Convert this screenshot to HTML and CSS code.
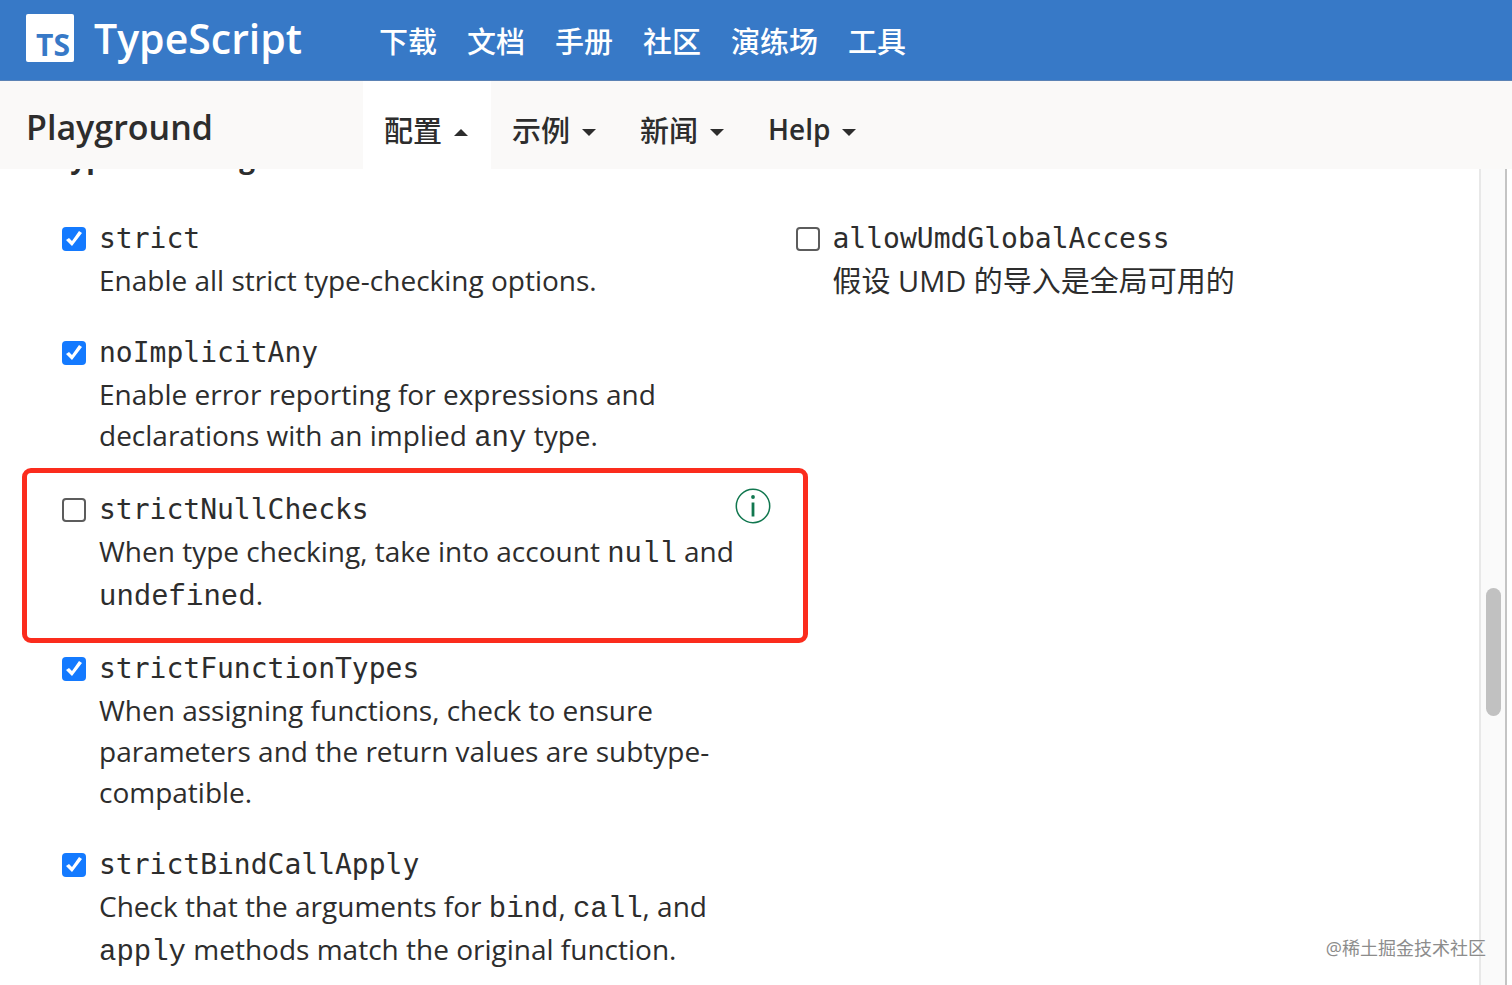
FILE: index.html
```
<!DOCTYPE html>
<html lang="zh-CN">
<head>
    <meta charset="UTF-8">
    <meta name="viewport" content="width=device-width, initial-scale=1.0">
    <title>TypeScript Playground</title>
    <link rel="stylesheet" href="styles.css">
</head>
<body>
    <header class="site-header">
        <a class="brand" href="#">
            <span class="logo">TS</span>
            <span class="brand-name">TypeScript</span>
        </a>
        <nav class="site-nav">
            <a href="#">下载</a>
            <a href="#">文档</a>
            <a href="#">手册</a>
            <a href="#">社区</a>
            <a href="#">演练场</a>
            <a href="#">工具</a>
        </nav>
    </header>

    <div class="subnav">
        <h1>Playground</h1>
        <button class="tab active" type="button">配置 <span class="caret up"></span></button>
        <button class="tab" type="button">示例 <span class="caret"></span></button>
        <button class="tab" type="button">新闻 <span class="caret"></span></button>
        <button class="tab latin" type="button">Help <span class="caret"></span></button>
    </div>

    <div class="panel">
        <main class="settings">
            <h2>Type Checking</h2>
            <div class="columns">
                <div class="column">
                    <div class="option">
                        <input type="checkbox" id="strict" checked>
                        <div class="option-text">
                            <label for="strict">strict</label>
                            <p>Enable all strict type-checking options.</p>
                        </div>
                    </div>
                    <div class="option">
                        <input type="checkbox" id="noImplicitAny" checked>
                        <div class="option-text">
                            <label for="noImplicitAny">noImplicitAny</label>
                            <p>Enable error reporting for expressions and declarations with an implied <code>any</code> type.</p>
                        </div>
                    </div>
                    <div class="option highlight">
                        <input type="checkbox" id="strictNullChecks">
                        <div class="option-text">
                            <label for="strictNullChecks">strictNullChecks</label>
                            <p>When type checking, take into account <code>null</code> and <code>undefined</code>.</p>
                        </div>
                        <a class="info" href="#" aria-label="strictNullChecks info">
                            <svg width="36" height="36" viewBox="0 0 36 36">
                                <circle cx="18" cy="18" r="16.7" fill="none" stroke="#11774f" stroke-width="1.5"/>
                                <circle cx="18" cy="9" r="1.9" fill="#11774f"/>
                                <path d="M18 14.5V28.5" stroke="#11774f" stroke-width="2.8"/>
                            </svg>
                        </a>
                    </div>
                    <div class="option">
                        <input type="checkbox" id="strictFunctionTypes" checked>
                        <div class="option-text">
                            <label for="strictFunctionTypes">strictFunctionTypes</label>
                            <p>When assigning functions, check to ensure parameters and the return values are subtype-compatible.</p>
                        </div>
                    </div>
                    <div class="option">
                        <input type="checkbox" id="strictBindCallApply" checked>
                        <div class="option-text">
                            <label for="strictBindCallApply">strictBindCallApply</label>
                            <p>Check that the arguments for <code>bind</code>, <code>call</code>, and <code>apply</code> methods match the original function.</p>
                        </div>
                    </div>
                </div>
                <div class="column">
                    <div class="option">
                        <input type="checkbox" id="allowUmdGlobalAccess">
                        <div class="option-text">
                            <label for="allowUmdGlobalAccess">allowUmdGlobalAccess</label>
                            <p class="zh">假设 UMD 的导入是全局可用的</p>
                        </div>
                    </div>
                </div>
            </div>
        </main>
        <div class="scrollbar"><div class="thumb"></div></div>
        <span class="watermark">@稀土掘金技术社区</span>
    </div>
</body>
</html>
```
FILE: styles.css
```
* {
    box-sizing: border-box;
}
body {
    margin: 0;
    height: 100vh;
    display: flex;
    flex-direction: column;
    overflow: hidden;
    font-family: "Open Sans", "Noto Sans CJK SC", sans-serif;
    font-size: 28px;
    color: #2d2d2d;
    background: #fff;
}
h1, h2, p {
    margin: 0;
}
a {
    text-decoration: none;
}

/* blue bar */
.site-header {
    display: flex;
    align-items: center;
    flex: none;
    height: 81px;
    padding: 0 26px;
    background: #3779c7;
    border-bottom: 1px solid #5b82b5;
}
.brand {
    display: flex;
    align-items: center;
    gap: 20px;
    width: 353px;
    padding-bottom: 4px;
    color: #fff;
}
.logo {
    display: flex;
    align-items: flex-end;
    justify-content: flex-end;
    width: 48px;
    height: 48px;
    padding: 0 4px;
    border-radius: 2px;
    background: #fff;
    color: #3779c7;
    font-size: 30px;
    font-weight: 700;
    line-height: 34px;
}
.brand-name {
    font-size: 41px;
    font-weight: 600;
    line-height: 48px;
}
.site-nav {
    display: flex;
    gap: 30px;
}
.site-nav a {
    color: #fff;
    font-size: 29px;
    font-weight: 500;
}

/* playground tabs */
.subnav {
    display: flex;
    flex: none;
    height: 88px;
    background: #faf9f8;
}
.subnav h1 {
    width: 363px;
    padding-left: 26px;
    font-size: 34px;
    font-weight: 600;
    line-height: 92px;
}
.tab {
    display: flex;
    align-items: center;
    gap: 12px;
    padding: 8px 23px 0 21px;
    border: none;
    background: none;
    color: #2d2d2d;
    font-family: inherit;
    font-size: 29px;
    font-weight: 500;
}
.tab.active {
    background: #fff;
}
.tab.latin {
    font-size: 28px;
    font-weight: 600;
}
.caret {
    margin-top: 6px;
    border: 7px solid transparent;
    border-top-color: #2d2d2d;
    border-bottom: none;
}
.caret.up {
    border-top: none;
    border-bottom: 7px solid #2d2d2d;
}

/* settings */
.panel {
    position: relative;
    display: flex;
    flex: 1;
    min-height: 0;
    padding-right: 5px;
}
.settings {
    flex: 1;
    overflow: hidden;
    padding-left: 54px;
}
.settings h2 {
    margin-top: -32px;
    margin-bottom: 39px;
    font-size: 28px;
    font-weight: 700;
    line-height: 41px;
}
.columns {
    display: grid;
    grid-template-columns: 50% 1fr;
    column-gap: 25px;
    padding-left: 8px;
}
.option {
    position: relative;
    display: flex;
    gap: 13px;
    margin-bottom: 30px;
}
.option input {
    appearance: none;
    flex: none;
    width: 24px;
    height: 24px;
    margin: 10px 0 0;
    border: 2px solid #5c5c5c;
    border-radius: 4px;
    background: #fff;
}
.option input:checked {
    border: none;
    background: #147aff;
}
.option input:checked::after {
    content: "";
    display: block;
    height: 24px;
    background: #fff;
    clip-path: polygon(4px 13px, 7px 11px, 10px 14px, 17px 4px, 20px 6px, 10px 19px);
}
.option label {
    display: block;
    font-family: "DejaVu Sans Mono", monospace;
    line-height: 43px;
}
.option p {
    line-height: 41px;
}
.option .zh {
    font-size: 29px;
}
.option code {
    font-family: "Liberation Mono", monospace;
    font-size: 29px;
    line-height: 38px;
}
.info {
    position: absolute;
    top: 0;
    right: 0;
    display: flex;
}
.highlight::before {
    content: "";
    position: absolute;
    top: -20px;
    right: -37px;
    bottom: -26px;
    left: -40px;
    border: 5px solid #fb2c1d;
    border-radius: 9px;
    pointer-events: none;
}

.scrollbar {
    position: relative;
    flex: none;
    width: 28px;
    background: #fafafa;
    border-left: 2px solid #e8e8e8;
    border-right: 2px solid #c4c4c4;
}
.thumb {
    position: absolute;
    top: 51.4%;
    left: 5px;
    width: 15px;
    height: 128px;
    border-radius: 8px;
    background: #c1c1c1;
}
.watermark {
    position: absolute;
    right: 26px;
    bottom: 23px;
    color: #8c8c8c;
    font-size: 18px;
    line-height: 28px;
}
```
